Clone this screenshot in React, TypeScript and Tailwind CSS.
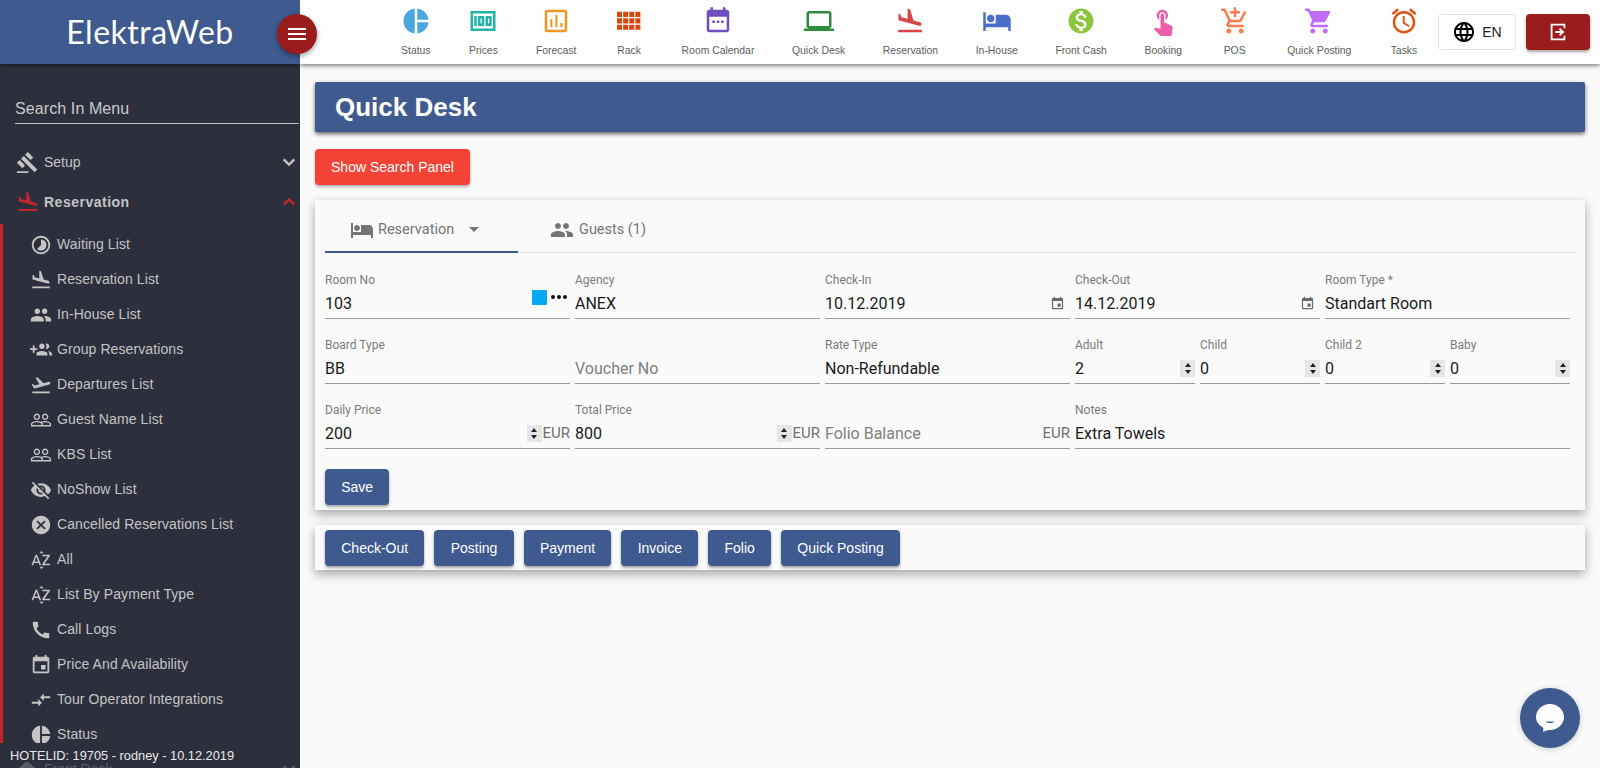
import React from "react";

const P = {
  land: "M2.5 19h19v2h-19zm7.18-5.73l4.35 1.16 5.31 1.42c.8.21 1.62-.26 1.84-1.06.21-.8-.26-1.62-1.06-1.84l-5.31-1.42-2.76-9.02L10.12 2v8.28L5.15 8.95l-.93-2.32-1.45-.39v5.17l1.6.43 5.31 1.43z",
  takeoff: "M2.5 19h19v2h-19zm19.57-9.36c-.21-.8-1.04-1.28-1.84-1.06L14.92 10l-6.9-6.43-1.93.51 4.14 7.17-4.97 1.33-1.97-1.54-1.45.39 1.82 3.16.77 1.33 1.6-.43 5.31-1.42 4.35-1.16L21 11.49c.81-.23 1.28-1.05 1.07-1.85z",
  people: "M16 11c1.66 0 2.99-1.34 2.99-3S17.66 5 16 5c-1.66 0-3 1.34-3 3s1.34 3 3 3zm-8 0c1.66 0 2.99-1.34 2.99-3S9.66 5 8 5C6.34 5 5 6.34 5 8s1.34 3 3 3zm0 2c-2.33 0-7 1.17-7 3.5V19h14v-2.5c0-2.33-4.67-3.5-7-3.5zm8 0c-.29 0-.62.02-.97.05 1.16.84 1.97 1.97 1.97 3.45V19h6v-2.5c0-2.33-4.67-3.5-7-3.5z",
  groupAdd: "M8 10H5V7H3v3H0v2h3v3h2v-3h3v-2zm10 1c1.66 0 2.99-1.34 2.99-3S19.66 5 18 5c-.32 0-.63.05-.91.14.57.81.9 1.79.9 2.86s-.34 2.04-.9 2.86c.28.09.59.14.91.14zm-5 0c1.66 0 2.99-1.34 2.99-3S14.66 5 13 5c-1.66 0-3 1.34-3 3s1.34 3 3 3zm6.62 2.16c.83.73 1.38 1.66 1.38 2.84v2h3v-2c0-1.54-2.37-2.49-4.38-2.84zM13 13c-2 0-6 1-6 3v2h12v-2c0-2-4-3-6-3z",
  peopleOutline: "M16.5 13c-1.2 0-3.07.34-4.5 1-1.43-.67-3.3-1-4.5-1C5.33 13 1 14.08 1 16.25V19h22v-2.75c0-2.17-4.33-3.25-6.5-3.25zm-4 4.5h-10v-1.25c0-.54 2.56-1.75 5-1.75s5 1.21 5 1.75v1.25zm9 0H14v-1.25c0-.46-.2-.86-.52-1.22.88-.3 1.96-.53 3.02-.53 2.44 0 5 1.21 5 1.75v1.25zM7.5 12c1.93 0 3.5-1.57 3.5-3.5S9.43 5 7.5 5 4 6.57 4 8.5 5.57 12 7.5 12zm0-5.5c1.1 0 2 .9 2 2s-.9 2-2 2-2-.9-2-2 .9-2 2-2zm9 5.5c1.93 0 3.5-1.57 3.5-3.5S18.43 5 16.5 5 13 6.57 13 8.5s1.57 3.5 3.5 3.5zm0-5.5c1.1 0 2 .9 2 2s-.9 2-2 2-2-.9-2-2 .9-2 2-2z",
  eyeOff: "M12 7c2.76 0 5 2.24 5 5 0 .65-.13 1.26-.36 1.83l2.92 2.92c1.51-1.26 2.7-2.89 3.43-4.75-1.73-4.39-6-7.5-11-7.5-1.4 0-2.74.25-3.98.7l2.16 2.16C10.74 7.13 11.35 7 12 7zM2 4.27l2.28 2.28.46.46C3.08 8.3 1.78 10.02 1 12c1.73 4.39 6 7.5 11 7.5 1.55 0 3.03-.3 4.38-.84l.42.42L19.73 22 21 20.73 3.27 3 2 4.27zM7.53 9.8l1.55 1.55c-.05.21-.08.43-.08.65 0 1.66 1.34 3 3 3 .22 0 .44-.03.65-.08l1.55 1.55c-.67.33-1.41.53-2.2.53-2.76 0-5-2.24-5-5 0-.79.2-1.53.53-2.2zm4.31-.78l3.15 3.15.02-.16c0-1.66-1.34-3-3-3l-.17.01z",
  cancel: "M12 2C6.47 2 2 6.47 2 12s4.47 10 10 10 10-4.47 10-10S17.53 2 12 2zm5 13.59L15.59 17 12 13.41 8.41 17 7 15.59 10.59 12 7 8.41 8.41 7 12 10.59 15.59 7 17 8.41 13.41 12 17 15.59z",
  call: "M20.01 15.38c-1.23 0-2.42-.2-3.53-.56-.35-.12-.74-.03-1.01.24l-1.57 1.97c-2.83-1.35-5.48-3.9-6.89-6.83l1.95-1.66c.27-.28.35-.67.24-1.02-.37-1.11-.56-2.3-.56-3.53 0-.54-.45-.99-.99-.99H4.19C3.65 3 3 3.24 3 3.99 3 13.28 10.73 21 20.01 21c.71 0 .99-.63.99-1.18v-3.45c0-.54-.45-.99-.99-.99z",
  event: "M17 12h-5v5h5v-5zM16 1v2H8V1H6v2H5c-1.11 0-1.99.9-1.99 2L3 19c0 1.1.89 2 2 2h14c1.1 0 2-.9 2-2V5c0-1.1-.9-2-2-2h-1V1h-2zm3 18H5V8h14v11z",
  hotel: "M7 13c1.66 0 3-1.34 3-3S8.66 7 7 7s-3 1.34-3 3 1.34 3 3 3zm12-6h-8v7H3V5H1v15h2v-3h18v3h2v-9c0-2.21-1.79-4-4-4z",
  pie: "M11 2v20c-5.07-.5-9-4.79-9-10s3.93-9.5 9-10zm2.03 0v8.99H22c-.47-4.74-4.24-8.52-8.97-8.99zm0 11.01V22c4.74-.47 8.5-4.25 8.97-8.99h-8.97z",
  gavel: "M1 21h12v2H1zM5.245 8.07l2.83-2.827 14.14 14.142-2.828 2.828zM12.317 1l5.657 5.656-2.83 2.83-5.654-5.66zM3.825 9.485l5.657 5.657-2.828 2.828-5.657-5.657z",
  cash: "M12 2C6.48 2 2 6.48 2 12s4.48 10 10 10 10-4.48 10-10S17.52 2 12 2zm1.41 16.09V20h-2.67v-1.93c-1.71-.36-3.16-1.46-3.27-3.4h1.96c.1 1.05.82 1.87 2.65 1.87 1.96 0 2.4-.98 2.4-1.59 0-.83-.44-1.61-2.67-2.14-2.48-.6-4.18-1.62-4.18-3.67 0-1.72 1.39-2.84 3.11-3.21V4h2.67v1.95c1.86.45 2.79 1.86 2.85 3.39H14.3c-.05-1.11-.64-1.87-2.22-1.87-1.5 0-2.4.68-2.4 1.64 0 .84.65 1.39 2.67 1.91s4.18 1.39 4.18 3.91c-.01 1.83-1.38 2.83-3.12 3.16z",
  touch: "M9 11.24V7.5C9 6.12 10.12 5 11.5 5S14 6.12 14 7.5v3.74c1.21-.81 2-2.18 2-3.74C16 5.01 13.99 3 11.5 3S7 5.01 7 7.5c0 1.56.79 2.93 2 3.74zm9.84 4.63l-4.54-2.26c-.17-.07-.35-.11-.54-.11H13v-6c0-.83-.67-1.5-1.5-1.5S10 6.67 10 7.5v10.74l-3.43-.72c-.08-.01-.15-.03-.24-.03-.31 0-.59.13-.79.33l-.79.8 4.94 4.94c.27.27.65.44 1.06.44h6.79c.75 0 1.33-.55 1.44-1.28l.75-5.27c.01-.07.02-.14.02-.2 0-.62-.38-1.16-.91-1.38z",
  addCart: "M11 9h2V6h3V4h-3V1h-2v3H8v2h3v3zm-4 9c-1.1 0-1.99.9-1.99 2S5.9 22 7 22s2-.9 2-2-.9-2-2-2zm10 0c-1.1 0-1.99.9-1.99 2s.89 2 1.99 2 2-.9 2-2-.9-2-2-2zm-9.83-3.25l.03-.12.9-1.63h7.45c.75 0 1.41-.41 1.75-1.03l3.86-7.01L19.42 4h-.01l-1.1 2-2.76 5H8.53l-.13-.27L6.16 6l-.95-2-.94-2H1v2h2l3.6 7.59-1.35 2.45c-.16.28-.25.61-.25.96 0 1.1.9 2 2 2h12v-2H7.42c-.13 0-.25-.11-.25-.25z",
  cart: "M7 18c-1.1 0-1.99.9-1.99 2S5.9 22 7 22s2-.9 2-2-.9-2-2-2zM1 2v2h2l3.6 7.59-1.35 2.45c-.16.28-.25.61-.25.96 0 1.1.9 2 2 2h12v-2H7.42c-.14 0-.25-.11-.25-.25l.03-.12.9-1.63h7.45c.75 0 1.41-.41 1.75-1.03l3.58-6.49c.08-.14.12-.31.12-.48 0-.55-.45-1-1-1H5.21l-.94-2H1zm16 16c-1.1 0-1.99.9-1.99 2s.89 2 1.99 2 2-.9 2-2-.9-2-2-2z",
  alarm: "M22 5.72l-4.6-3.86-1.29 1.53 4.6 3.86L22 5.72zM7.88 3.39L6.6 1.86 2 5.71l1.29 1.53 4.59-3.85zM12.5 8H11v6l4.75 2.85.75-1.23-4-2.37V8zM12 4c-4.97 0-9 4.03-9 9s4.02 9 9 9c4.97 0 9-4.03 9-9s-4.03-9-9-9zm0 16c-3.87 0-7-3.13-7-7s3.13-7 7-7 7 3.13 7 7-3.13 7-7 7z",
  laptop: "M20 18c1.1 0 1.99-.9 1.99-2L22 6c0-1.1-.9-2-2-2H4c-1.1 0-2 .9-2 2v10c0 1.1.9 2 2 2H0v2h24v-2h-4zM4 6h16v10H4V6z",
  globe: "M11.99 2C6.47 2 2 6.48 2 12s4.47 10 9.99 10C17.52 22 22 17.52 22 12S17.52 2 11.99 2zm6.93 6h-2.95c-.32-1.25-.78-2.45-1.38-3.56 1.84.63 3.37 1.91 4.33 3.56zM12 4.04c.83 1.2 1.48 2.53 1.91 3.96h-3.82c.43-1.43 1.08-2.76 1.91-3.96zM4.26 14C4.1 13.36 4 12.69 4 12s.1-1.36.26-2h3.38c-.08.66-.14 1.32-.14 2 0 .68.06 1.34.14 2H4.26zm.82 2h2.95c.32 1.25.78 2.45 1.38 3.56-1.84-.63-3.37-1.9-4.33-3.56zm2.95-8H5.08c.96-1.66 2.49-2.93 4.33-3.56C8.81 5.55 8.35 6.75 8.03 8zM12 19.96c-.83-1.2-1.48-2.53-1.91-3.96h3.82c-.43 1.43-1.08 2.76-1.91 3.96zM14.34 14H9.66c-.09-.66-.16-1.32-.16-2 0-.68.07-1.35.16-2h4.68c.09.65.16 1.32.16 2 0 .68-.07 1.34-.16 2zm.25 5.56c.6-1.11 1.06-2.31 1.38-3.56h2.95c-.96 1.65-2.49 2.93-4.33 3.56zM16.36 14c.08-.66.14-1.32.14-2 0-.68-.06-1.34-.14-2h3.38c.16.64.26 1.31.26 2s-.1 1.36-.26 2h-3.38z",
  compare: "M9.01 14H2v2h7.01v3L13 15l-3.99-4v3zm5.98-1v-3H22V8h-7.01V5L11 9l3.99 4z",
  az: "M14.94 4.66h-4.72l2.36-2.36zm-4.69 14.71h4.66l-2.33 2.33zM6.1 6.27L1.6 17.73h1.84l.92-2.45h5.11l.92 2.45h1.84L7.74 6.27H6.1zm-1.13 7.37l1.94-5.18 1.94 5.18H4.97zm10.76 2.5h6.12v1.59h-8.53v-1.29l5.92-8.56h-5.88v-1.6h8.3v1.26l-5.93 8.6z",
  timelapse: "M16.24 7.76C15.07 6.59 13.54 6 12 6v6l-4.24 4.24c2.34 2.34 6.14 2.34 8.49 0 2.34-2.34 2.34-6.14-.01-8.48zM12 2C6.48 2 2 6.48 2 12s4.48 10 10 10 10-4.48 10-10S17.52 2 12 2zm0 18c-4.42 0-8-3.58-8-8s3.58-8 8-8 8 3.58 8 8-3.58 8-8 8z",
  money: "M5 8h2v8H5zm7 0H9c-.55 0-1 .45-1 1v6c0 .55.45 1 1 1h3c.55 0 1-.45 1-1V9c0-.55-.45-1-1-1zm-1 6h-1v-4h1v4zm7-6h-3c-.55 0-1 .45-1 1v6c0 .55.45 1 1 1h3c.55 0 1-.45 1-1V9c0-.55-.45-1-1-1zm-1 6h-1v-4h1v4zM2 4v16h20V4H2zm2 14V6h16v12H4z",
  forecast: "M5 3h14c1.1 0 2 .9 2 2v14c0 1.1-.9 2-2 2H5c-1.1 0-2-.9-2-2V5c0-1.1.9-2 2-2zm0 2v14h14V5H5zm2.5 5.5h1.6V17H7.5zm4-3.5h1.6v10h-1.6zm4 6.5h1.6V17h-1.6z",
  rack: "M2.4 4.5h4v4.2h-4zm4.9 0h4v4.2h-4zm4.900 0h4v4.200h-4zm4.900 0h4v4.200h-4zM2.400 9.700h4v4.200h-4zm4.900 0h4v4.200h-4zm4.900 0h4v4.200h-4zm4.900 0h4v4.200h-4zM2.400 14.900h4v4.200h-4zm4.900 0h4v4.200h-4zm4.900 0h4v4.200h-4zm4.900 0h4v4.200h-4z",
  calendar: "M16 1v2H8V1H6v2H5c-1.11 0-2 .9-2 2v14c0 1.1.9 2 2 2h14c1.1 0 2-.9 2-2V5c0-1.1-.9-2-2-2h-1V1h-2zM5 8.5h14V19H5V8.5zM7.5 11.5h2v2h-2zm3.5 0h2v2h-2zm3.5 0h2v2h-2z",
  exit: "M4 3h16v5h-2V5H6v14h12v-3h2v5H4zM14.4 7.6L19 12l-4.6 4.4-1.4-1.4 2-2H9v-2h6l-2-2z",
  home: "M10 20v-6h4v6h5v-8h3L12 3 2 12h3v8z",
};

function Ic({ d, className }: { d: string; className: string }) {
  return (
    <svg viewBox="0 0 24 24" fill="currentColor" className={className}>
      <path d={d} />
    </svg>
  );
}

const nav = [
  { label: "Status", d: P.pie, c: "text-[#4da6e0]" },
  { label: "Prices", d: P.money, c: "text-[#1fb5a5]" },
  { label: "Forecast", d: P.forecast, c: "text-[#f39322]" },
  { label: "Rack", d: P.rack, c: "text-[#d9480f]" },
  { label: "Room Calendar", d: P.calendar, c: "text-[#6f4fbf]" },
  { label: "Quick Desk", d: P.laptop, c: "text-[#2e8b3d]" },
  { label: "Reservation", d: P.land, c: "text-[#d94545]" },
  { label: "In-House", d: P.hotel, c: "text-[#4a6fc9]" },
  { label: "Front Cash", d: P.cash, c: "text-[#8cc63f]" },
  { label: "Booking", d: P.touch, c: "text-[#ec5fa8]" },
  { label: "POS", d: P.addCart, c: "text-[#fb7a4f]" },
  { label: "Quick Posting", d: P.cart, c: "text-[#c06cf5]" },
  { label: "Tasks", d: P.alarm, c: "text-[#e0510f]" },
];

const menu = [
  { label: "Waiting List", d: P.timelapse },
  { label: "Reservation List", d: P.land },
  { label: "In-House List", d: P.people },
  { label: "Group Reservations", d: P.groupAdd },
  { label: "Departures List", d: P.takeoff },
  { label: "Guest Name List", d: P.peopleOutline },
  { label: "KBS List", d: P.peopleOutline },
  { label: "NoShow List", d: P.eyeOff },
  { label: "Cancelled Reservations List", d: P.cancel },
  { label: "All", d: P.az },
  { label: "List By Payment Type", d: P.az },
  { label: "Call Logs", d: P.call },
  { label: "Price And Availability", d: P.event },
  { label: "Tour Operator Integrations", d: P.compare },
  { label: "Status", d: P.pie },
];

function Spinner() {
  return (
    <div className="w-[15px] h-[17px] bg-[#e6e6e6] flex flex-col items-center justify-center gap-[3px] shrink-0 mb-[1px]">
      <div className="w-0 h-0 border-x-[3px] border-x-transparent border-b-[4px] border-b-[#222]" />
      <div className="w-0 h-0 border-x-[3px] border-x-transparent border-t-[4px] border-t-[#222]" />
    </div>
  );
}

function Field({
  label,
  value,
  placeholder,
  span = "col-span-2",
  children,
}: {
  label?: string;
  value?: string;
  placeholder?: string;
  span?: string;
  children?: React.ReactNode;
}) {
  return (
    <div className={span}>
      <div className="h-[16px] text-[12px] leading-[16px] text-[#7b7b7b]">{label}</div>
      <div className="h-[31px] flex items-center border-b border-[#9a9a9a] pt-[1px]">
        <div className={value ? "flex-1 text-[16px] text-[#1a1a1a]" : "flex-1 text-[16px] text-[#7f7f7f]"}>
          {value || placeholder}
        </div>
        {children}
      </div>
    </div>
  );
}

const Eur = () => <span className="text-[15px] text-[#6f6f6f] ml-[1px]">EUR</span>;
const Cal = () => <Ic d={P.event} className="w-[15px] h-[15px] text-[#6a6a6a] mr-[5px]" />;

function Btn({ children }: { children: React.ReactNode }) {
  return (
    <button className="h-[36px] px-[16.25px] rounded-[4px] bg-[#3f5a8f] text-white text-[14px] [font-family:Liberation_Sans,sans-serif] shadow-[0_2px_3px_rgba(0,0,0,0.35)]">
      {children}
    </button>
  );
}

export default function App() {
  return (
    <div className="relative flex w-[1600px] h-[768px] overflow-hidden bg-[#fafafa] [font-family:Roboto,sans-serif]">
      <aside className="relative w-[300px] h-[768px] shrink-0 overflow-hidden bg-[#2d303c] flex flex-col z-10 [font-family:Liberation_Sans,sans-serif]">
        <div className="h-[64px] shrink-0 bg-[#3f5a8f] flex items-center justify-center text-white text-[32px] [font-family:Lato,sans-serif] font-normal tracking-[0.5px] shadow-[0_2px_4px_rgba(0,0,0,0.4)]">
          ElektraWeb
        </div>
        <div className="shrink-0 mt-[33px] ml-[15px] mr-px h-[27px] border-b border-[#bdbdbd] text-[16px] text-[#c9c9c9] tracking-[0.1px] leading-[24px]">
          Search In Menu
        </div>
        <div className="shrink-0 mt-[18px] h-[40px] flex items-center pl-[16px] pr-[3px] text-[#c4c4c4] text-[14px]">
          <Ic d={P.gavel} className="w-[23px] h-[23px] mr-[5px]" />
          <span className="flex-1">Setup</span>
          <svg viewBox="0 0 24 24" className="w-[16px] h-[16px]" fill="none" stroke="currentColor" strokeWidth="3.5"><path d="M4 8l8 8 8-8" /></svg>
        </div>
        <div className="shrink-0 h-[40px] flex items-center pl-[16px] pr-[3px] text-[#c4c4c4] text-[14px] font-bold tracking-[0.5px]">
          <Ic d={P.land} className="w-[24px] h-[24px] mr-[4px] text-[#c0272d]" />
          <span className="flex-1">Reservation</span>
          <svg viewBox="0 0 24 24" className="w-[16px] h-[16px] text-[#c0272d]" fill="none" stroke="currentColor" strokeWidth="3.5"><path d="M4 16l8-8 8 8" /></svg>
        </div>
        <ul className="border-l-[3px] border-[#c0272d] shrink-0 mt-[2px] pt-[3px]">
          {menu.map((m) => (
            <li key={m.label + m.d.length} className="h-[35px] flex items-center pl-[27px] text-[14px] tracking-[0.1px] text-[#c4c4c4]">
              <Ic d={m.d} className="w-[22px] h-[22px] mr-[5px] shrink-0" />
              {m.label}
            </li>
          ))}
        </ul>
        <div className="shrink-0 mt-[6px] flex items-center pl-[16px] pr-[3px] text-[#5a5d68] text-[14px]">
          <Ic d={P.home} className="w-[22px] h-[22px] mr-[6px]" />
          <span className="flex-1">Front Desk</span>
          <svg viewBox="0 0 24 24" className="w-[16px] h-[16px]" fill="none" stroke="currentColor" strokeWidth="3.5"><path d="M4 8l8 8 8-8" /></svg>
        </div>
        <div className="absolute left-0 top-[743px] w-full h-[19px] pl-[10px] text-[12.8px] leading-[26px] text-[#e8e8e8] bg-[#2d303c]">
          HOTELID: 19705 - rodney - 10.12.2019
        </div>
      </aside>

      <button className="absolute left-[277px] top-[14px] z-20 w-[40px] h-[40px] rounded-full bg-[#9b1c1c] flex flex-col items-center justify-center gap-[3px] shadow-[0_2px_5px_rgba(0,0,0,0.4)]">
        <span className="w-[18px] h-[2px] bg-white" />
        <span className="w-[18px] h-[2px] bg-white" />
        <span className="w-[18px] h-[2px] bg-white" />
      </button>

      <div className="flex-1 min-w-0 flex flex-col">
        <header className="h-[64px] shrink-0 bg-white shadow-[0_2px_4px_rgba(0,0,0,0.45)] flex items-start pl-[82px] relative z-[5] [font-family:Liberation_Sans,sans-serif]">
          {nav.map((n) => (
            <div key={n.label} className="px-[18.8px] h-[64px] flex flex-col items-center pt-[6px]">
              <Ic d={n.d} className={"w-[30px] h-[30px] " + n.c} />
              <span className="mt-[8px] text-[10.4px] leading-[14px] text-[#5c5c5c] whitespace-nowrap">{n.label}</span>
            </div>
          ))}
          <div className="ml-auto flex items-center gap-[10px] pt-[14px] pr-[10px]">
            <div className="w-[78px] h-[36px] border border-[#e4e4e4] rounded-[3px] bg-white flex items-center justify-center gap-[6px] text-[14px] text-[#222]">
              <Ic d={P.globe} className="w-[24px] h-[24px] text-black" />
              EN
            </div>
            <div className="w-[64px] h-[36px] rounded-[4px] bg-[#9b1c1c] flex items-center justify-center shadow-[0_2px_3px_rgba(0,0,0,0.35)]">
              <Ic d={P.exit} className="w-[22px] h-[22px] text-white" />
            </div>
          </div>
        </header>

        <main className="flex-1 px-[15px] pt-[18px] flex flex-col items-stretch">
          <div className="h-[50px] shrink-0 bg-[#3f5a8f] flex items-center pl-[20px] text-white text-[26px] font-bold [font-family:Liberation_Sans,sans-serif] rounded-[2px] shadow-[0_2px_4px_rgba(0,0,0,0.6)]">
            Quick Desk
          </div>
          <button className="mt-[17px] self-start h-[36px] w-[155px] pt-px rounded-[4px] bg-[#f44336] text-white text-[14px] [font-family:Liberation_Sans,sans-serif] shadow-[0_2px_3px_rgba(0,0,0,0.3)]">
            Show Search Panel
          </button>

          <section className="mt-[15px] h-[310px] shrink-0 bg-[#fafafa] pl-[10px] pr-[15px] shadow-[0_4px_10px_rgba(0,0,0,0.35)]">
            <div className="h-[53px] flex border-b border-[#e0e0e0] mr-[-5px] text-[14.5px] text-[#757575]">
              <div className="w-[193px] h-[53px] border-b-2 border-[#3f5a8f] flex items-center pt-[8px] pl-[25px]">
                <Ic d={P.hotel} className="w-[24px] h-[24px] mr-[4px]" />
                Reservation
                <span className="ml-[15px] w-0 h-0 border-x-[5px] border-x-transparent border-t-[5px] border-t-[#757575]" />
              </div>
              <div className="flex items-center pt-[8px] pl-[32px]">
                <Ic d={P.people} className="w-[24px] h-[24px] mr-[5px]" />
                Guests (1)
              </div>
            </div>

            <div className="pt-[19px] grid grid-cols-10 gap-x-[5px] gap-y-[18px]">
              <Field label="Room No" value="103">
                <span className="w-[15px] h-[15px] bg-[#03a9f4] rounded-[1px] mr-[4px] mb-[13px]" />
                <span className="flex gap-[2px] mb-[13px] mr-[3px]">
                  <i className="w-[4px] h-[4px] rounded-full bg-[#111]" />
                  <i className="w-[4px] h-[4px] rounded-full bg-[#111]" />
                  <i className="w-[4px] h-[4px] rounded-full bg-[#111]" />
                </span>
              </Field>
              <Field label="Agency" value="ANEX" />
              <Field label="Check-In" value="10.12.2019"><Cal /></Field>
              <Field label="Check-Out" value="14.12.2019"><Cal /></Field>
              <Field label="Room Type *" value="Standart Room" />

              <Field label="Board Type" value="BB" />
              <Field placeholder="Voucher No" />
              <Field label="Rate Type" value="Non-Refundable" />
              <Field label="Adult" value="2" span="col-span-1"><Spinner /></Field>
              <Field label="Child" value="0" span="col-span-1"><Spinner /></Field>
              <Field label="Child 2" value="0" span="col-span-1"><Spinner /></Field>
              <Field label="Baby" value="0" span="col-span-1"><Spinner /></Field>

              <Field label="Daily Price" value="200"><Spinner /><Eur /></Field>
              <Field label="Total Price" value="800"><Spinner /><Eur /></Field>
              <Field placeholder="Folio Balance"><Eur /></Field>
              <Field label="Notes" value="Extra Towels" span="col-span-4" />
            </div>

            <div className="mt-[20px]">
              <Btn>Save</Btn>
            </div>
          </section>

          <section className="mt-[15px] h-[45px] shrink-0 bg-[#fafafa] px-[10px] pt-[5px] flex gap-[10px] shadow-[0_4px_10px_rgba(0,0,0,0.35)]">
            {["Check-Out", "Posting", "Payment", "Invoice", "Folio", "Quick Posting"].map((b) => (
              <Btn key={b}>{b}</Btn>
            ))}
          </section>
        </main>
      </div>

      <div className="absolute left-[1520px] top-[688px] z-20 w-[60px] h-[60px] rounded-full bg-[#3f5a8f] shadow-[0_1px_6px_rgba(0,0,0,0.2)] flex items-center justify-center">
        <svg viewBox="0 0 32 32" className="w-[32px] h-[32px]">
          <path d="M16 2c7.7 0 14 5.8 14 13s-6.3 13-14 13c-2 0-4 .5-7 2 .5-2 .5-3 .2-4.4C4.8 23.3 2 19.5 2 15 2 7.8 8.3 2 16 2z" fill="#fff" />
          <path d="M11.5 19.5c2.5 2 6.5 2 9 0z" fill="#3f5a8f" />
        </svg>
      </div>
    </div>
  );
}
